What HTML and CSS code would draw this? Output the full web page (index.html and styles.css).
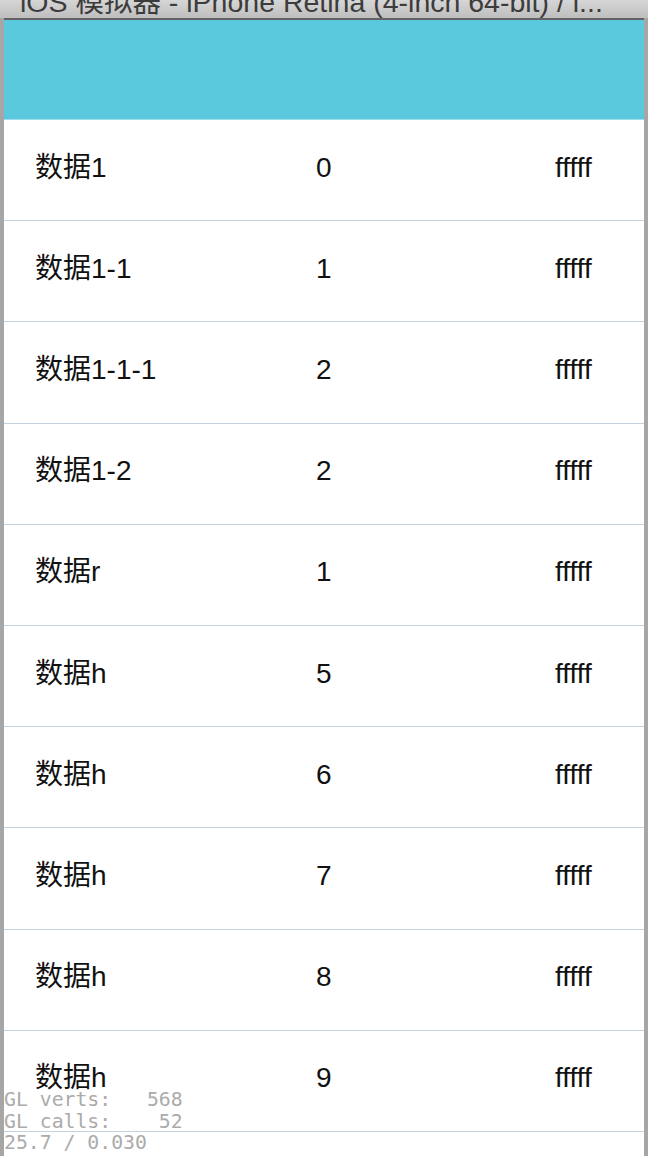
FILE: index.html
```html
<!DOCTYPE html>
<html lang="zh-CN">
<head>
  <meta charset="UTF-8">
  <meta name="viewport" content="width=device-width, initial-scale=1.0">
  <title>iOS 模拟器</title>
  <link rel="stylesheet" href="styles.css">
</head>
<body>
  <div class="titlebar">
    <div class="title">iOS 模拟器 - iPhone Retina (4-inch 64-bit) / i...</div>
  </div>
  <div class="screen">
    <div class="navbar"></div>
    <div class="list">
      <div class="row"><span>数据1</span><span>0</span><span>fffff</span></div>
      <div class="row"><span>数据1-1</span><span>1</span><span>fffff</span></div>
      <div class="row"><span>数据1-1-1</span><span>2</span><span>fffff</span></div>
      <div class="row"><span>数据1-2</span><span>2</span><span>fffff</span></div>
      <div class="row"><span>数据r</span><span>1</span><span>fffff</span></div>
      <div class="row"><span>数据h</span><span>5</span><span>fffff</span></div>
      <div class="row"><span>数据h</span><span>6</span><span>fffff</span></div>
      <div class="row"><span>数据h</span><span>7</span><span>fffff</span></div>
      <div class="row"><span>数据h</span><span>8</span><span>fffff</span></div>
      <div class="row"><span>数据h</span><span>9</span><span>fffff</span></div>
      <div class="row"></div>
    </div>
    <div class="stats">GL verts:   568
GL calls:    52
25.7 / 0.030</div>
  </div>
</body>
</html>
```

FILE: styles.css
```css
html, body {
  margin: 0;
  padding: 0;
  height: 100%;
  overflow: hidden;
}
body {
  background: #a6a6a6;
  font-family: 'Liberation Sans', 'Noto Sans CJK SC', sans-serif;
}
.titlebar {
  height: 18px;
  overflow: hidden;
  background: linear-gradient(#d6d6d6, #bebebe);
}
.title {
  margin-top: -10px;
  padding-left: 20px;
  font-size: 28.5px;
  line-height: 24px;
  color: #3c3c3c;
  white-space: nowrap;
}
.screen {
  position: relative;
  margin: 0 4px;
  border-top: 2px solid #626262;
  background: #fff;
  height: 1136px;
  overflow: hidden;
}
.navbar {
  height: 99px;
  background: #5ac9de;
  border-bottom: 1px solid #9edeea;
}
.row {
  box-sizing: border-box;
  height: 101.2px;
  display: grid;
  grid-template-columns: 281px 239px 1fr;
  align-items: center;
  padding: 0 0 5px 31px;
  border-bottom: 1px solid #c3d1e2;
  font-size: 28px;
  line-height: 32px;
  color: #111;
}
.stats {
  position: absolute;
  left: 0;
  top: 1069px;
  font-family: 'DejaVu Sans Mono', monospace;
  font-size: 19.8px;
  line-height: 21.5px;
  color: #ababab;
  white-space: pre;
  text-shadow: 0 0 1px #fff;
}
```
